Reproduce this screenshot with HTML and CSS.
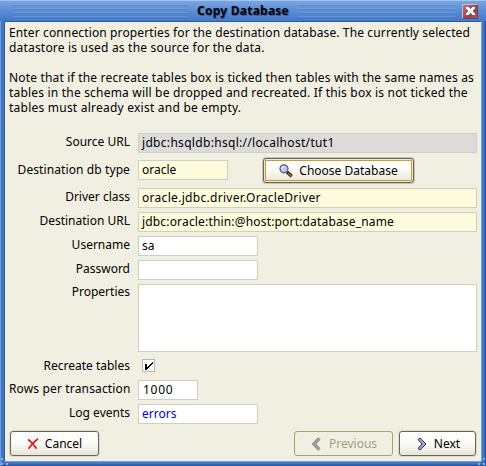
FILE: index.html
```html
<!DOCTYPE html>
<html lang="en">
<head>
<meta charset="utf-8">
<title>Copy Database</title>
<link rel="stylesheet" href="styles.css">
</head>
<body>
<div class="window">
  <header class="titlebar">
    <span class="grip grip-left"></span>
    <h1>Copy Database</h1>
    <span class="grip grip-right"></span>
    <button class="close" aria-label="Close"><svg width="9" height="8" viewBox="0 0 9 8" shape-rendering="crispEdges"><path fill="#fff" d="M0 0h3v1h1v1h1v-1h1v-1h3v2h-1v1h-1v2h1v1h1v2h-3v-1h-1v-1h-1v1h-1v1h-3v-2h1v-1h1v-2h-1v-1h-1z"/></svg></button>
  </header>
  <main class="content">
    <div class="intro">
      <p><span class="l1">Enter connection properties for the destination database. The currently selected</span><span class="l2">datastore is used as the source for the data.</span></p>
      <p><span class="l3">Note that if the recreate tables box is ticked then tables with the same names as</span><span class="l4">tables in the schema will be dropped and recreated. If this box is not ticked the</span><span class="l5">tables must already exist and be empty.</span></p>
    </div>
    <form class="form">
      <div class="row"><label>Source URL</label><div class="field wide readonly"><span class="v-source">jdbc:hsqldb:hsql://localhost/tut1</span></div></div>
      <div class="row row-type"><label class="t-type">Destination db type</label><div class="field type required">oracle</div>
        <button type="button" class="btn choose"><svg width="14" height="14" viewBox="0 0 14 14"><path d="M8 8l4.7 4.2" stroke="#21150d" stroke-width="3.2"/><path d="M9 9l3.2 2.9" stroke="#b47740" stroke-width="1.4"/><circle cx="5" cy="4.8" r="4" fill="#bbc7ed" stroke="#555468" stroke-width="1.2"/><path d="M2.8 5.2q0-2.3 2.4-2.5" fill="none" stroke="#eef3ff" stroke-width="1.3"/></svg><span>Choose Database</span></button></div>
      <div class="row"><label>Driver class</label><div class="field wide required"><span class="v-driver">oracle.jdbc.driver.OracleDriver</span></div></div>
      <div class="row"><label>Destination URL</label><div class="field wide required"><span class="v-dest">jdbc:oracle:thin:@host:port:database_name</span></div></div>
      <div class="row"><label>Username</label><div class="field medium">sa</div></div>
      <div class="row"><label>Password</label><div class="field medium"></div></div>
      <div class="row row-props"><label>Properties</label><div class="field wide area"></div></div>
      <div class="row row-check"><label>Recreate tables</label><div class="check"><svg width="9" height="9" viewBox="0 0 9 9" shape-rendering="crispEdges"><path d="M1 3h2v3h1v-1h1v-1h1v-1h1v-1h1v-1h1v2h-1v1h-1v1h-1v1h-1v1h-1v1h-1v1h-2z"/></svg></div></div>
      <div class="row"><label class="t-rows">Rows per transaction</label><div class="field small"><span class="v-num">1000</span></div></div>
      <div class="row"><label>Log events</label><div class="field medium link">errors</div></div>
    </form>
    <footer class="actions">
      <button class="btn cancel"><svg width="12" height="12" viewBox="0 0 12 12"><path d="M1 1.5C4 3.5 7 7 9.7 10.8M11 .8C7.2 3.5 4.2 7 1.4 10.8" fill="none" stroke="#e81c1c" stroke-width="1.8"/></svg><span>Cancel</span></button>
      <button class="btn previous" disabled><svg width="10" height="14" viewBox="0 0 10 14"><path d="M7 .8L1 7l6 6.2L9 11.5 5 7l4-4.5z" fill="#a0a0a0" stroke="#808080" stroke-width=".8"/></svg><span>Previous</span></button>
      <button class="btn next"><svg width="10" height="14" viewBox="0 0 10 14"><path d="M3 .9L9 7l-6 6.1L1 11.4 5 7 1 2.6z" fill="#a5a1df" stroke="#202042" stroke-width=".9"/></svg><span>Next</span></button>
    </footer>
  </main>
  <i class="corner corner-left"></i><i class="corner corner-right"></i>
</div>
</body>
</html>
```

FILE: styles.css
```css
* { box-sizing: border-box; }
body {
  margin: 0;
  font: 12px/15px "Noto Sans", "Open Sans", sans-serif;
  color: #000;
}
.window {
  position: relative;
  width: 486px;
  height: 466px;
  padding: 0 5px 5px;
  background: #4277c3;
  box-shadow: inset 1px 0 #709bda, inset -1px -1px #2757a0, inset -2px -2px #3465b0;
}
.titlebar {
  display: flex;
  align-items: center;
  height: 21px;
  margin: 0 -5px;
  padding: 0 8px 0 13px;
  background: linear-gradient(#a5c5f0 0 1px, #79a5e1 1px, #5e8fd5 10px, #4479c9 21px);
}
.grip {
  height: 14px;
  background: repeating-linear-gradient(#8aaee2 0 1px, #3f72bd 1px 2px, transparent 2px 4px);
  opacity: .45;
}
.grip-left { width: 175px; }
.grip-right { width: 157px; margin-right: 7px; }
h1 {
  width: 110px;
  margin: 0;
  font: bold 12px/18px "Noto Sans", sans-serif;
  letter-spacing: .25px;
  text-align: center;
  text-shadow: 1px 1px #37609f;
  white-space: nowrap;
}
.close {
  display: grid;
  place-items: center;
  width: 16px;
  height: 15px;
  margin-top: 1px;
  padding: 0;
  border: 1px solid #d5b5bf;
  border-right-color: #783f57;
  border-bottom-color: #783f57;
  background: linear-gradient(135deg, #b57787, #95434b 60%, #a55259);
}
.content {
  height: 440px;
  padding: 3px 4px 0;
  background: #f1efe2;
  border-top: 1px solid #2b5ba8;
  box-shadow: -1px 0 #2b5ba8, 1px 0 #79a3df, 0 1px #79a3df;
}
.intro { height: 108px; white-space: nowrap; }
.intro p { margin: 0 0 15px; }
.intro span { display: block; height: 15px; }
.l1 { letter-spacing: .13px; }
.l2 { letter-spacing: .19px; }
.l3 { letter-spacing: .18px; }
.l4 { letter-spacing: .195px; }
.l5 { letter-spacing: .23px; }
.v-source { letter-spacing: .31px; }
.v-driver { letter-spacing: .3px; }
.v-dest { letter-spacing: .17px; }
.v-num { margin-left: 1px; letter-spacing: .7px; }
.row .t-type { letter-spacing: .1px; }
.row .t-rows { letter-spacing: .15px; }
.row {
  display: flex;
  height: 20px;
  margin-bottom: 4px;
}
.row label {
  width: 121px;
  margin-right: 8px;
  line-height: 18px;
  text-align: right;
  white-space: nowrap;
}
.field {
  height: 20px;
  padding: 0 3px;
  border: 1px solid #cfcfc0;
  background: #fff;
  line-height: 17px;
  white-space: nowrap;
}
.wide { width: 339px; }
.medium { width: 120px; }
.small { width: 60px; }
.type { width: 90px; margin: 2px 35px 0 0; }
.readonly { background: #dbdbdb; }
.required { background: #fcfcdc; }
.link { color: #0000e0; }
.row-type { height: 25px; margin: 5px 0; }
.row-type label { margin-top: 3px; }
.row-props { height: 68px; margin-bottom: 7px; }
.row-props label { line-height: 15px; }
.area { height: 68px; }
.row-check { height: 13px; margin-bottom: 8px; }
.row-check label { line-height: 13px; }
.check {
  display: grid;
  place-items: center;
  width: 13px;
  height: 13px;
  margin-left: 4px;
  border: 1px solid #b7b7a9;
  background: #fff;
}
.btn {
  display: flex;
  align-items: center;
  justify-content: center;
  height: 25px;
  padding: 0;
  border: 1px solid #66665a;
  border-radius: 3px;
  background: linear-gradient(#fff, #fbfaf5 50%, #e7e5d8);
  box-shadow: 0 0 0 1px #dddccb;
  color: #000;
  font: inherit;
}
.choose {
  width: 151px;
  gap: 6px;
  box-shadow: inset 0 0 0 1px #e9e9d5, inset 0 0 0 2px #c79b35, 0 0 0 1px #c5c5b4;
}
.actions { display: flex; margin-top: 7px; }
.cancel { width: 89px; margin-left: 1px; gap: 6px; }
.previous {
  width: 99px;
  gap: 8px;
  margin-left: auto;
  padding-left: 1px;
  color: #a3a17d;
  border-color: #a3a17d;
  background: transparent;
  box-shadow: none;
}
.next { width: 77px; gap: 7px; margin: 0 1px 0 6px; padding-left: 2px; }
.corner {
  position: absolute;
  bottom: 1px;
  width: 8px;
  height: 8px;
  background:
    linear-gradient(#87addf, #87addf) 1px 1px / 2px 2px no-repeat,
    linear-gradient(#87addf, #87addf) 1px 6px / 2px 2px no-repeat,
    linear-gradient(#87addf, #87addf) 6px 6px / 2px 2px no-repeat;
}
.corner-left { left: 0; }
.corner-right { right: 0; transform: scaleX(-1); }
```
